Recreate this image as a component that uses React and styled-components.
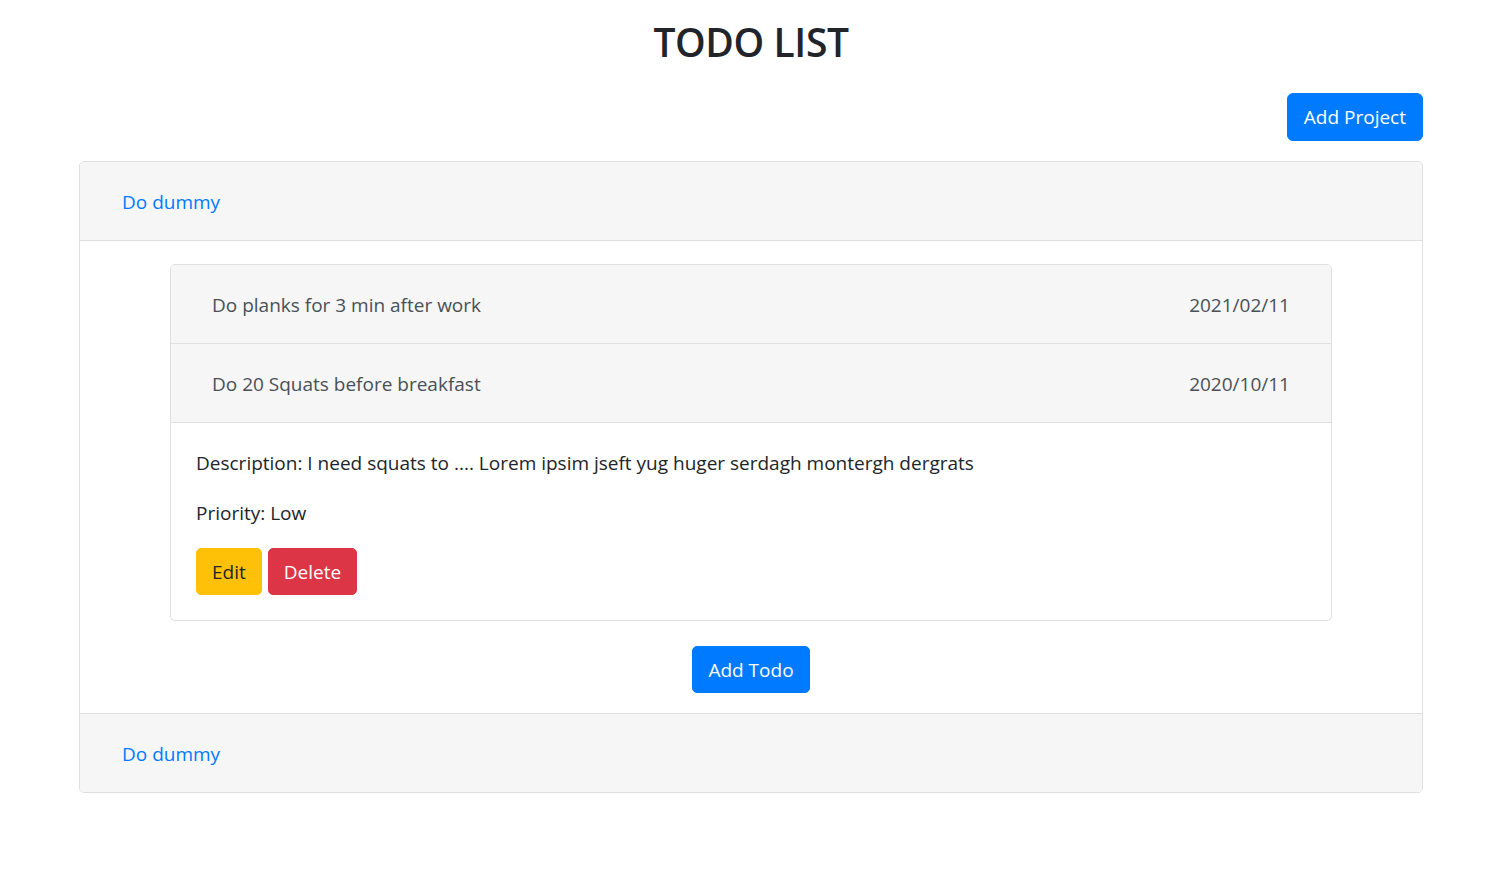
import React from "react";
import styled, { createGlobalStyle } from "styled-components";

const Global = createGlobalStyle`
  html, body { margin: 0; padding: 0; background: #fff; }
  body {
    font-family: "Open Sans", "Noto Sans", sans-serif;
    font-size: 19px;
    line-height: 30px;
    color: #212529;
  }
  * { box-sizing: border-box; }
`;

const Page = styled.div`
  padding: 0 68px 60px 79px;
`;

const Title = styled.h1`
  margin: 0;
  padding-top: 17px;
  height: 93px;
  text-align: center;
  font-size: 39px;
  line-height: 50px;
  font-weight: 600;
  letter-spacing: -0.4px;
`;

const Toolbar = styled.div`
  display: flex;
  justify-content: flex-end;
  margin-bottom: 20px;
`;

const Button = styled.button`
  font-family: inherit;
  font-size: 19px;
  line-height: 30px;
  padding: ${(p) => (p.$lg ? "8px 16px" : "7.5px 15px")};
  border: 1px solid ${(p) => p.$bg};
  background: ${(p) => p.$bg};
  color: ${(p) => p.$fg};
  border-radius: ${(p) => (p.$lg ? "6px" : "5px")};
  cursor: pointer;
  height: ${(p) => (p.$lg ? "48px" : "47px")};
  display: inline-flex;
  align-items: center;
`;

const Accordion = styled.div`
  border: 1px solid #dfdfdf;
  border-radius: 5px;
  overflow: hidden;
`;

const Header = styled.div`
  background: #f6f6f6;
  height: 79px;
  border-top: ${(p) => (p.$last ? "1px solid #dfdfdf" : "none")};
  border-bottom: ${(p) => (p.$last ? "none" : "1px solid #dfdfdf")};
  display: flex;
  align-items: center;
  padding: 1px 25px 0;
`;

const LinkButton = styled.span`
  color: #007bff;
  padding: 0 17px;
  font-size: 19px;
`;

const Body = styled.div`
  padding: 23px 25px 20px;
  display: flex;
  flex-direction: column;
  align-items: center;
`;

const InnerCard = styled.div`
  width: 1162px;
  border: 1px solid #dfdfdf;
  border-radius: 5px;
  overflow: hidden;
`;

const TodoRow = styled.div`
  background: #f6f6f6;
  height: 79px;
  border-bottom: 1px solid #dfdfdf;
  display: flex;
  align-items: center;
  justify-content: space-between;
  padding: 1px 41px 0;
  color: #495057;
  font-size: 19px;
`;

const Details = styled.div`
  padding: 25px;
`;

const Para = styled.p`
  margin: 0 0 20px;
  font-size: 19px;
  line-height: 30px;
`;

const Actions = styled.div`
  display: flex;
  gap: 6px;
`;

const AddTodoWrap = styled.div`
  margin-top: 25px;
`;

export default function App() {
  return (
    <>
      <Global />
      <Page>
        <Title>TODO LIST</Title>
        <Toolbar>
          <Button $lg $bg="#007bff" $fg="#fff">Add Project</Button>
        </Toolbar>
        <Accordion>
          <Header>
            <LinkButton>Do dummy</LinkButton>
          </Header>
          <Body>
            <InnerCard>
              <TodoRow>
                <span>Do planks for 3 min after work</span>
                <span>2021/02/11</span>
              </TodoRow>
              <TodoRow>
                <span>Do 20 Squats before breakfast</span>
                <span>2020/10/11</span>
              </TodoRow>
              <Details>
                <Para>Description: I need squats to .... Lorem ipsim jseft yug huger serdagh montergh dergrats</Para>
                <Para>Priority: Low</Para>
                <Actions>
                  <Button $bg="#ffc107" $fg="#212529">Edit</Button>
                  <Button $bg="#dc3545" $fg="#fff">Delete</Button>
                </Actions>
              </Details>
            </InnerCard>
            <AddTodoWrap>
              <Button $bg="#007bff" $fg="#fff">Add Todo</Button>
            </AddTodoWrap>
          </Body>
          <Header $last>
            <LinkButton>Do dummy</LinkButton>
          </Header>
        </Accordion>
      </Page>
    </>
  );
}
